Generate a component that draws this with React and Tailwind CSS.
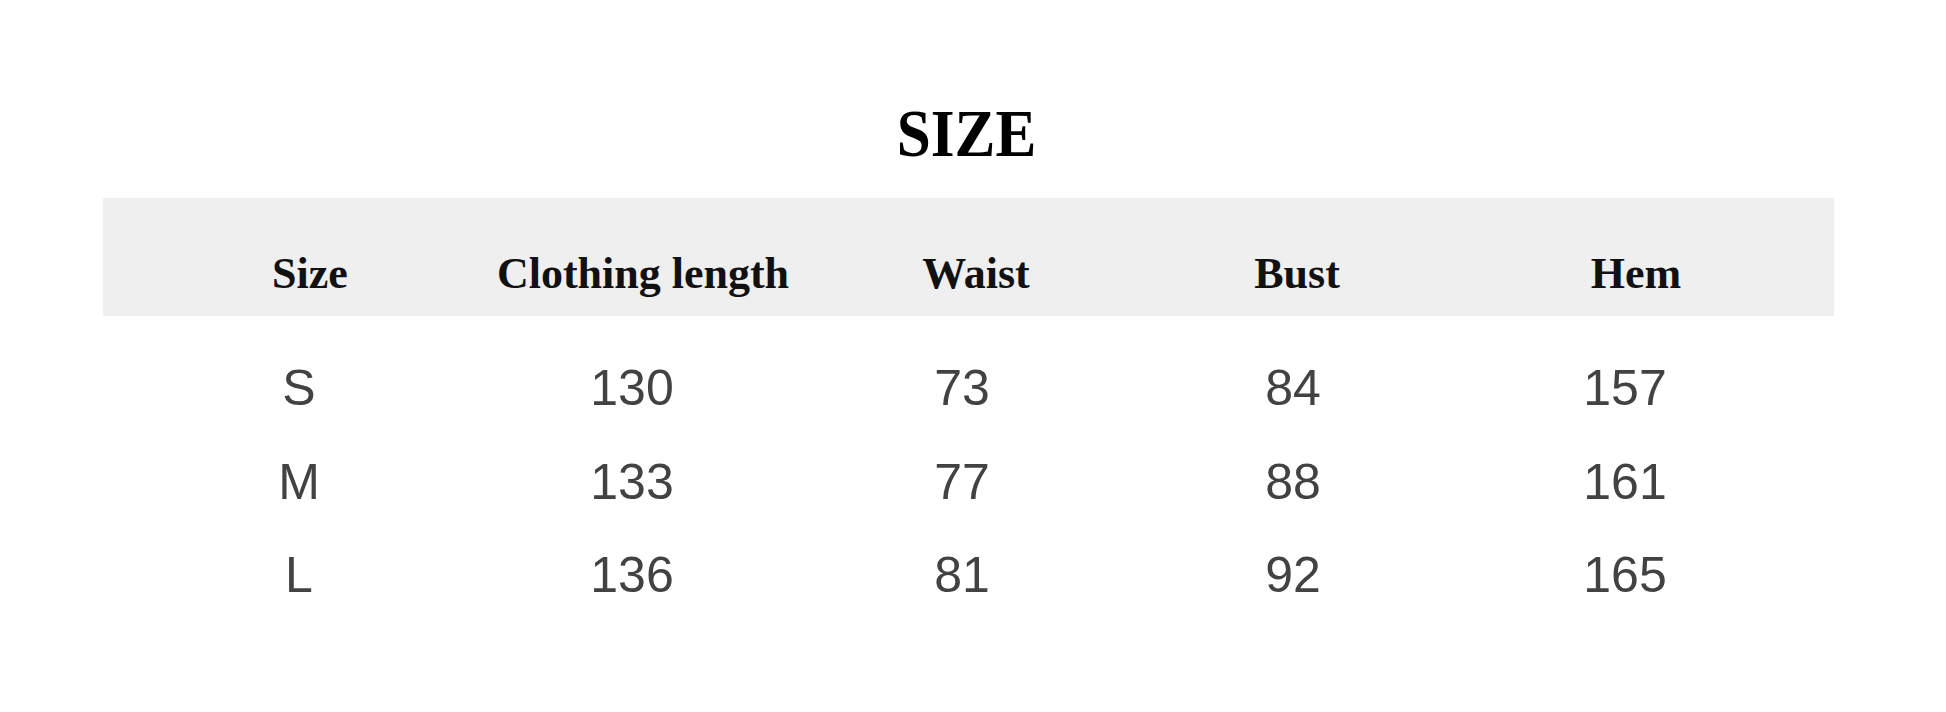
const HEADERS = ['Size', 'Clothing length', 'Waist', 'Bust', 'Hem']

const ROWS = [
  ['S', '130', '73', '84', '157'],
  ['M', '133', '77', '88', '161'],
  ['L', '136', '81', '92', '165'],
]

export default function App() {
  return (
    <div className="w-[1946px] h-[712px] bg-white overflow-hidden">
      {/* title */}
      <div className="pt-[99px] flex justify-center">
        <h1 className="font-['Liberation_Serif',serif] font-bold text-[68px] leading-[68px] text-black scale-x-[0.9] mr-[14px]">
          SIZE
        </h1>
      </div>

      {/* header band */}
      <div className="mt-[31px] ml-[103px] w-[1731px] h-[118px] bg-[#efefef] pt-[54px]">
        <div className="grid grid-cols-[414px_252px_414px_228px_450px]">
          {HEADERS.map(h => (
            <div key={h} className="flex justify-center font-['Liberation_Serif',serif] font-bold text-[44px] leading-[44px] text-[#111] whitespace-nowrap">
              {h}
            </div>
          ))}
        </div>
      </div>

      {/* data rows */}
      <div className="mt-[26px] ml-[103px] w-[1731px]">
        {ROWS.map(r => (
          <div key={r[0]} className="grid grid-cols-[392px_274px_386px_276px_388px]">
            {r.map((c, i) => (
              <div key={i} className="text-center font-['Liberation_Sans',Arial,sans-serif] text-[50px] leading-[93.5px] text-[#424242]">
                {c}
              </div>
            ))}
          </div>
        ))}
      </div>
    </div>
  )
}
